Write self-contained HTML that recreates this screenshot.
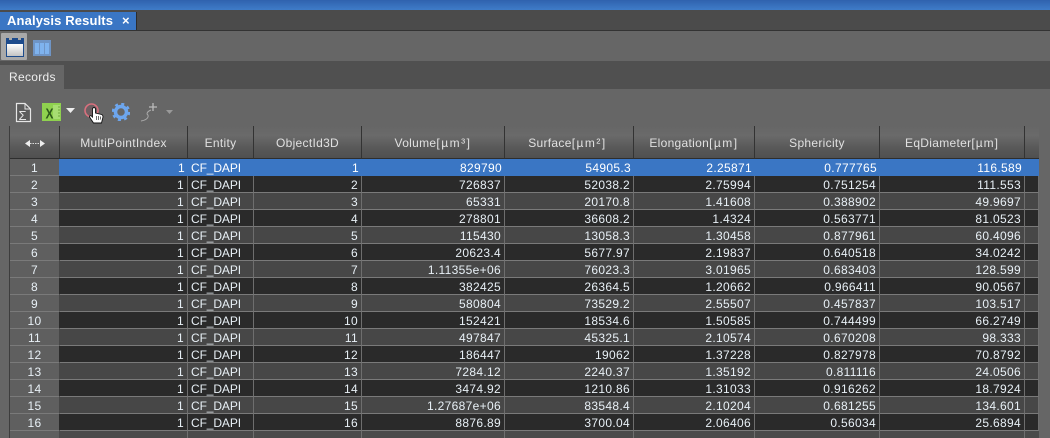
<!DOCTYPE html>
<html><head><meta charset="utf-8"><title>Analysis Results</title>
<style>
html,body{margin:0;padding:0;width:1050px;height:438px;overflow:hidden;background:#666;font-family:"Liberation Sans",sans-serif}
.a{position:absolute}
#top{left:0;top:0;width:1050px;height:10px;background:linear-gradient(#2f62ae,#3f7cc8)}
#tabbar{left:0;top:10px;width:1050px;height:20px;background:#4b4b4b}
#tab{left:0;top:12px;width:136px;height:18px;background:#3a76c4;color:#fff;font:bold 13px/18px "Liberation Sans",sans-serif;border-right:1px solid #2c2c2c}
#tab span{position:absolute;left:7px;top:0;white-space:nowrap;letter-spacing:.13px}
#tab i{position:absolute;left:122px;top:0;font:bold 13px/17px "Liberation Sans",sans-serif}
#tl{left:0;top:30px;width:1050px;height:1px;background:#333}
#strip{left:0;top:61px;width:1050px;height:28px;background:#505050}
#rec{left:0;top:65px;width:64px;height:24px;background:#666;color:#eee;font:12px/24px "Liberation Sans",sans-serif;text-indent:9px;letter-spacing:.3px}
#btn{left:1px;top:33px;width:26px;height:27px;background:#a9a9a9;border-radius:1px}
#tbl{left:10px;top:126px;border-collapse:separate;border-spacing:0;table-layout:fixed;width:1029px;font-size:12px;color:#e8f0f6}
#tbl td,#tbl th{padding:0;overflow:hidden;white-space:nowrap}
#tbl th{height:33px;font-weight:normal;letter-spacing:.3px;background:linear-gradient(#666 0,#6a6a6a 30%,#585858 70%,#505050 100%);border-right:1px solid #333;border-bottom:1px solid #2e2e2e;color:#e0e0e0;vertical-align:middle;padding-top:2px;box-sizing:border-box}
#tbl th u{text-decoration:none;letter-spacing:1px}
#tbl th u.w{letter-spacing:1.5px}
#tbl tr.r td{height:17px;box-sizing:border-box;line-height:14px;text-align:right;padding:2px 3px 0 0;letter-spacing:.33px;border-right:1px solid #6e6e6e;border-bottom:1px solid #7a7a7a}
#tbl tr.r td:first-child{text-align:center;padding:3px 0 0;line-height:13px;background:#5f5f5f;background-clip:padding-box}
#tbl tr.r td.l{text-align:left;padding:2px 0 0 3px;letter-spacing:-.1px}
#tbl tr.d td{background:#2a2a2a}
#tbl tr.g td{background:#474747}
#tbl tr.d td:first-child{background:#5f5f5f;border-right-color:#2a2a2a}
#tbl tr.g td:first-child{background:#5f5f5f;border-right-color:#474747}
#tbl tr.s td{background:#3a76c4;border-right-color:#3a76c4;border-bottom-color:#3a76c4;color:#fff;padding-right:2px}
#tbl tr.s td:first-child{background:#5f5f5f;color:#e8f0f6;border-bottom-color:#7a7a7a}
#ll{left:9px;top:126px;width:1px;height:312px;background:#3d3d3d}
#rest{left:10px;top:431px;width:1029px;height:7px;background:#4a4a4a}
#rest b{position:absolute;top:0;width:1px;height:7px;background:#6e6e6e}
</style></head><body>
<div class="a" id="top"></div>
<div class="a" id="tabbar"></div>
<div class="a" id="tab"><span>Analysis Results</span><i>×</i></div>
<div class="a" id="tl"></div>
<div class="a" id="btn"></div>
<svg class="a" style="left:6px;top:38px" width="18" height="19" viewBox="0 0 18 19"><defs><linearGradient id="g" x1="0" y1="0" x2="0" y2="1"><stop offset="0" stop-color="#fff"/><stop offset="1" stop-color="#c4c4c4"/></linearGradient></defs><rect y="0" width="18" height="19" fill="#1d4b8c"/><rect x="1" y="6" width="16" height="12" fill="url(#g)"/><rect x="3" y="0" width="3" height="2" fill="#a9a9a9"/><rect x="12" y="0" width="3" height="2" fill="#a9a9a9"/></svg>
<svg class="a" style="left:33px;top:40px" width="18" height="16" viewBox="0 0 18 16"><rect width="18" height="16" fill="#6f95c6"/><rect x="2" y="3" width="4" height="11" fill="#7fb3ee"/><rect x="7" y="3" width="4" height="11" fill="#7fb3ee"/><rect x="12" y="3" width="4" height="11" fill="#7fb3ee"/></svg>
<div class="a" id="strip"></div>
<div class="a" id="rec">Records</div>
<svg class="a" style="left:15px;top:102px" width="17" height="21" viewBox="0 0 17 21"><path d="M1.500 1.500H10L15.500 7V19.500H1.500Z" fill="#5c5c5c" stroke="#e6e6e6" stroke-width="1.200"/><path d="M10 1.500V7H15.500" fill="none" stroke="#e6e6e6"/><text x="3.500" y="18" font-family="Liberation Sans,sans-serif" font-size="13" fill="#e6e6e6">Σ</text></svg>
<svg class="a" style="left:42px;top:103px" width="19" height="18" viewBox="0 0 19 18"><rect width="19" height="18" fill="#8fd14f"/><rect x="11" y="2" width="7" height="14" fill="#a7dd72"/><path d="M16 4h2M16 7h2M16 10h2M16 13h2" stroke="#6fa83c"/><text transform="translate(3.500 15.500) scale(.8 1)" font-family="Liberation Sans,sans-serif" font-weight="bold" font-size="15" fill="#2d5a1a">X</text></svg>
<svg class="a" style="left:66px;top:108px" width="9" height="6"><path d="M0 0H9L4.500 5Z" fill="#eee"/></svg>
<svg class="a" style="left:83px;top:102px" width="21" height="22" viewBox="0 0 21 22"><circle cx="8.500" cy="8.500" r="6.500" fill="#6e5f62" stroke="#d9707e" stroke-width="1.600"/><path d="M9.500 6.500Q11 4.500 12.500 6.500V11L18.500 12.500Q20 13 20 15L18.500 21H10.500L6.500 15Q6.500 13 8.500 14L9.500 15Z" fill="#fff" stroke="#111" stroke-width=".9"/><path d="M13.500 14v4M15.500 14v4M17.500 14.500v3" stroke="#333" stroke-width=".7"/></svg>
<svg class="a" style="left:112px;top:103px" width="18" height="18" viewBox="0 0 18 18"><circle cx="9" cy="9" r="5.500" fill="none" stroke="#6da6ee" stroke-width="3.500"/><circle cx="9" cy="9" r="8" fill="none" stroke="#6da6ee" stroke-width="2.500" stroke-dasharray="3 3.280"/></svg>
<svg class="a" style="left:140px;top:103px" width="35" height="19" viewBox="0 0 35 19"><path d="M1 18Q7 17 8 14Q8.500 12 7 11Q7 8.500 11 7" fill="none" stroke="#aaa" stroke-width="1"/><path d="M13 0v8M9 4h8" stroke="#bbb" stroke-width="1.300"/><path d="M26 7H33L29.500 11Z" fill="#999"/></svg>
<div class="a" id="ll"></div>
<table class="a" id="tbl"><colgroup><col style="width:50px"><col style="width:128px"><col style="width:66px"><col style="width:108px"><col style="width:143px"><col style="width:129px"><col style="width:121px"><col style="width:125px"><col style="width:145px"><col style="width:14px"></colgroup>
<tr><th><svg width="20" height="7" viewBox="0 0 20 7" style="display:block;margin:0 auto 0 15px"><path d="M0 3.500L5 0V7ZM20 3.500L15 0V7Z" fill="#eee"/><path d="M5 3.500H15" stroke="#ddd" stroke-dasharray="1.500 1"/></svg></th><th>MultiPointIndex</th><th>Entity</th><th>ObjectId3D</th><th>Volume<u class="w">[µm³]</u></th><th style="padding-right:3px">Surface<u class="w">[µm²]</u></th><th>Elongation<u class="w">[µm]</u></th><th>Sphericity</th><th>EqDiameter<u>[µm]</u></th><th style="border-right:0"></th></tr>
<tr class="r s"><td>1</td><td>1</td><td class="l">CF_DAPI</td><td>1</td><td>829790</td><td>54905.3</td><td>2.25871</td><td>0.777765</td><td>116.589</td><td></td></tr>
<tr class="r d"><td>2</td><td>1</td><td class="l">CF_DAPI</td><td>2</td><td>726837</td><td>52038.2</td><td>2.75994</td><td>0.751254</td><td>111.553</td><td></td></tr>
<tr class="r g"><td>3</td><td>1</td><td class="l">CF_DAPI</td><td>3</td><td>65331</td><td>20170.8</td><td>1.41608</td><td>0.388902</td><td>49.9697</td><td></td></tr>
<tr class="r d"><td>4</td><td>1</td><td class="l">CF_DAPI</td><td>4</td><td>278801</td><td>36608.2</td><td>1.4324</td><td>0.563771</td><td>81.0523</td><td></td></tr>
<tr class="r g"><td>5</td><td>1</td><td class="l">CF_DAPI</td><td>5</td><td>115430</td><td>13058.3</td><td>1.30458</td><td>0.877961</td><td>60.4096</td><td></td></tr>
<tr class="r d"><td>6</td><td>1</td><td class="l">CF_DAPI</td><td>6</td><td>20623.4</td><td>5677.97</td><td>2.19837</td><td>0.640518</td><td>34.0242</td><td></td></tr>
<tr class="r g"><td>7</td><td>1</td><td class="l">CF_DAPI</td><td>7</td><td>1.11355e+06</td><td>76023.3</td><td>3.01965</td><td>0.683403</td><td>128.599</td><td></td></tr>
<tr class="r d"><td>8</td><td>1</td><td class="l">CF_DAPI</td><td>8</td><td>382425</td><td>26364.5</td><td>1.20662</td><td>0.966411</td><td>90.0567</td><td></td></tr>
<tr class="r g"><td>9</td><td>1</td><td class="l">CF_DAPI</td><td>9</td><td>580804</td><td>73529.2</td><td>2.55507</td><td>0.457837</td><td>103.517</td><td></td></tr>
<tr class="r d"><td>10</td><td>1</td><td class="l">CF_DAPI</td><td>10</td><td>152421</td><td>18534.6</td><td>1.50585</td><td>0.744499</td><td>66.2749</td><td></td></tr>
<tr class="r g"><td>11</td><td>1</td><td class="l">CF_DAPI</td><td>11</td><td>497847</td><td>45325.1</td><td>2.10574</td><td>0.670208</td><td>98.333</td><td></td></tr>
<tr class="r d"><td>12</td><td>1</td><td class="l">CF_DAPI</td><td>12</td><td>186447</td><td>19062</td><td>1.37228</td><td>0.827978</td><td>70.8792</td><td></td></tr>
<tr class="r g"><td>13</td><td>1</td><td class="l">CF_DAPI</td><td>13</td><td>7284.12</td><td>2240.37</td><td>1.35192</td><td>0.811116</td><td>24.0506</td><td></td></tr>
<tr class="r d"><td>14</td><td>1</td><td class="l">CF_DAPI</td><td>14</td><td>3474.92</td><td>1210.86</td><td>1.31033</td><td>0.916262</td><td>18.7924</td><td></td></tr>
<tr class="r g"><td>15</td><td>1</td><td class="l">CF_DAPI</td><td>15</td><td>1.27687e+06</td><td>83548.4</td><td>2.10204</td><td>0.681255</td><td>134.601</td><td></td></tr>
<tr class="r d"><td>16</td><td>1</td><td class="l">CF_DAPI</td><td>16</td><td>8876.89</td><td>3700.04</td><td>2.06406</td><td>0.56034</td><td>25.6894</td><td></td></tr>
</table>
<div class="a" id="rest"><b style="left:177px"></b><b style="left:243px"></b><b style="left:351px"></b><b style="left:494px"></b><b style="left:623px"></b><b style="left:744px"></b><b style="left:869px"></b><b style="left:1014px"></b><span class="a" style="left:0;top:0;width:49px;height:7px;background:#5f5f5f"></span></div>
</body></html>
